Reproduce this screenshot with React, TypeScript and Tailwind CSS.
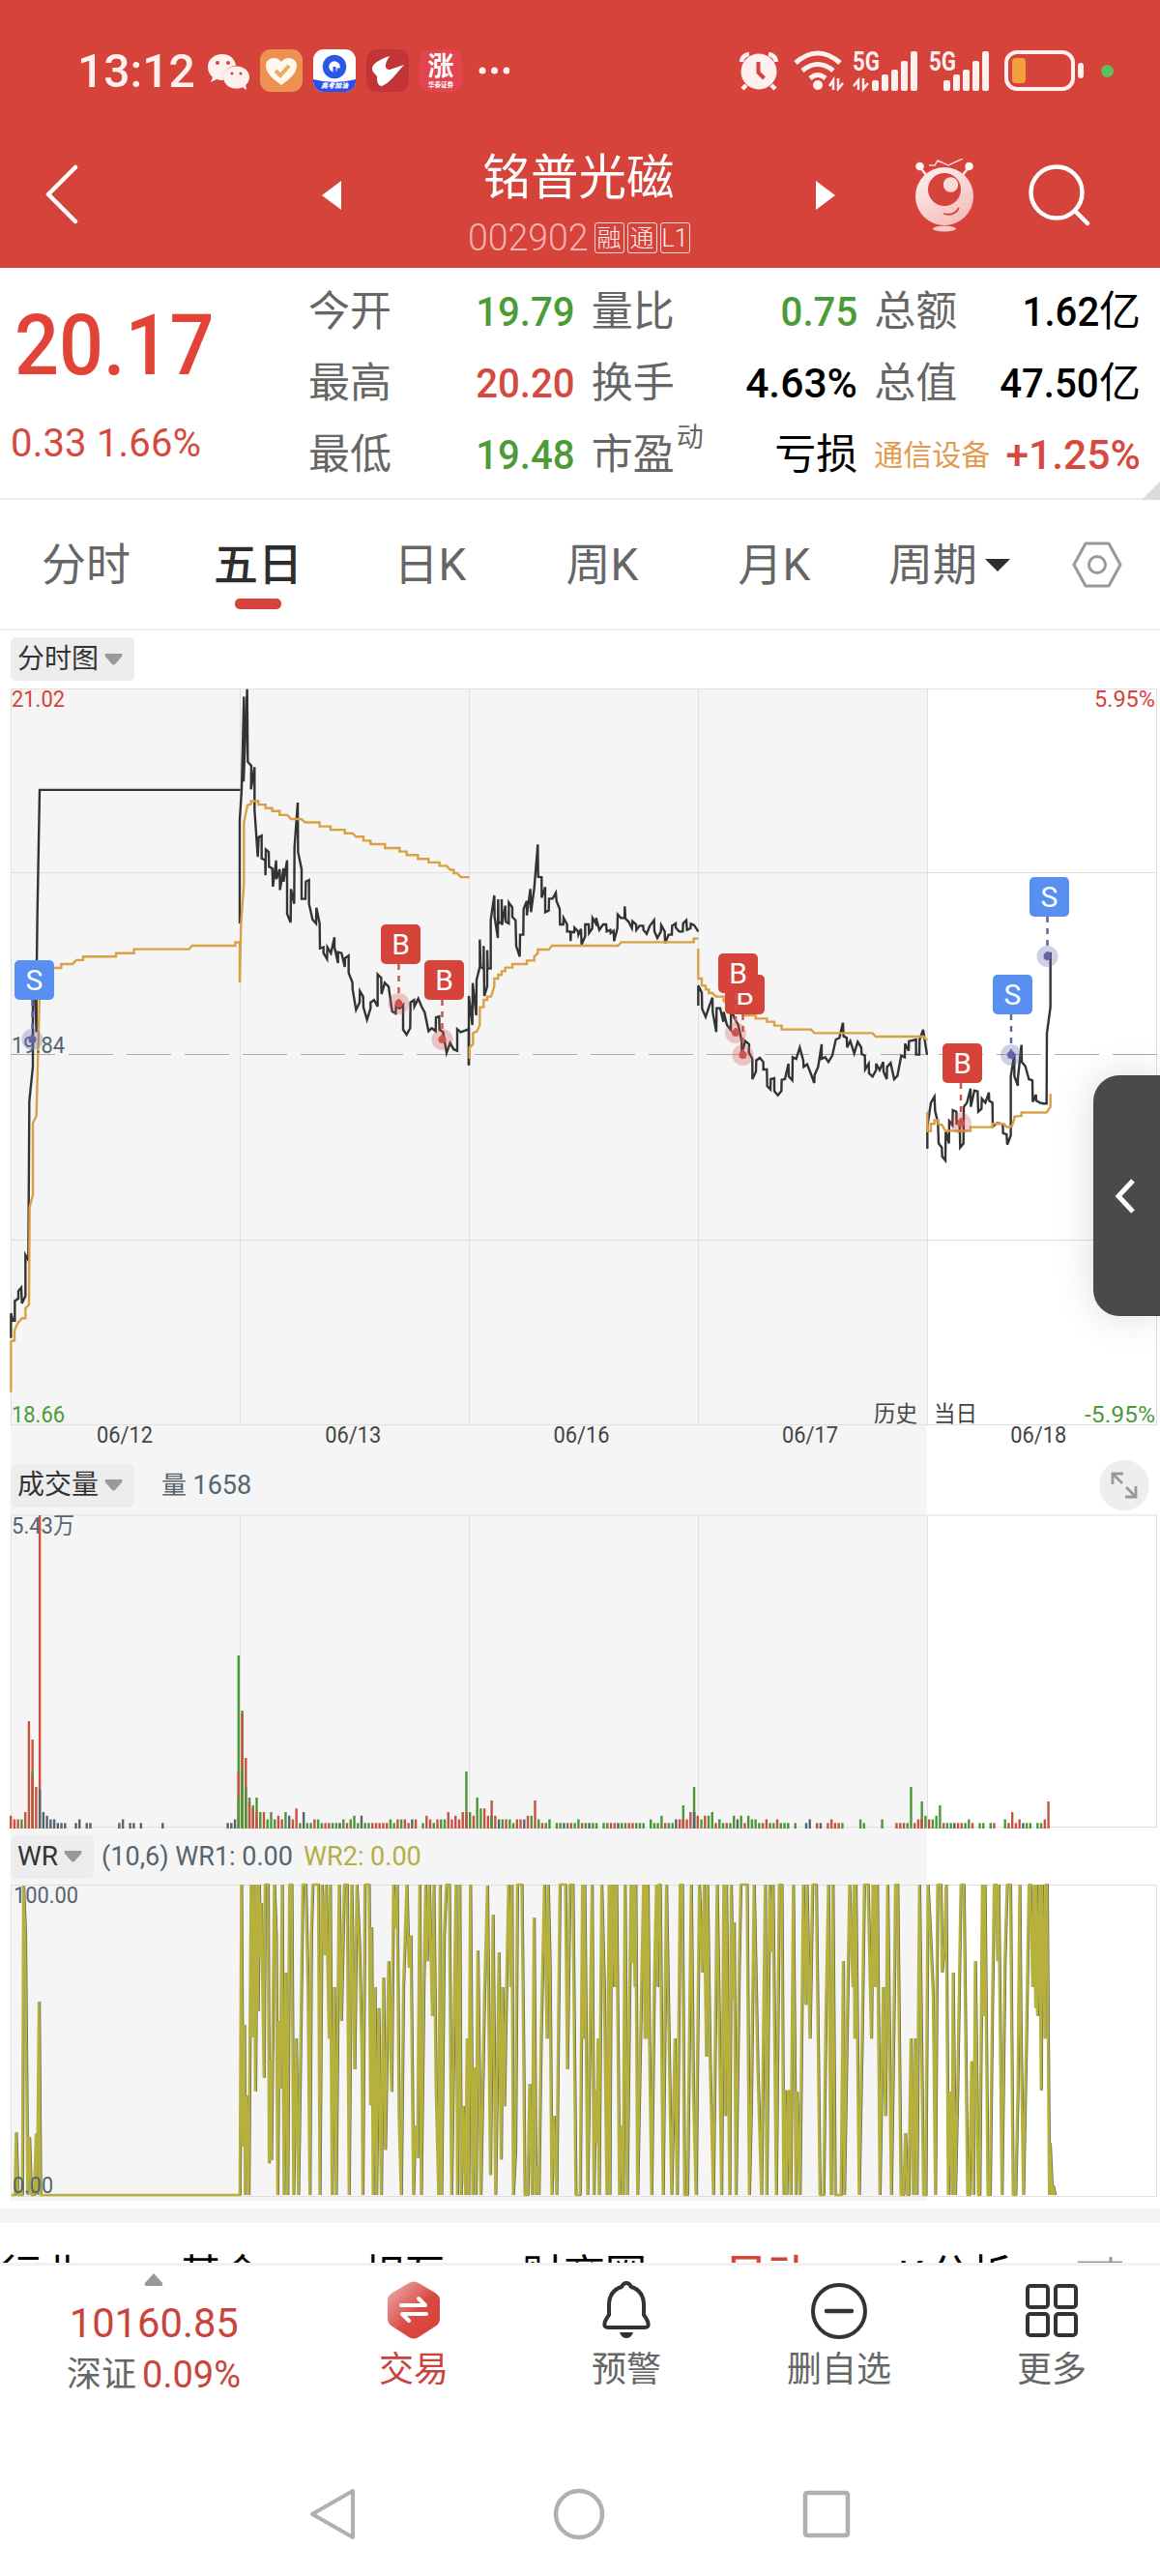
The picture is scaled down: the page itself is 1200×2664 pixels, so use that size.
import { clsx } from 'clsx'
import type { ReactNode } from 'react'

const quotes = [
  { label: '今开', value: '19.79', tone: 'text-[#4b9b37]' },
  { label: '量比', value: '0.75', tone: 'text-[#4b9b37]' },
  { label: '总额', value: '1.62', unit: '亿', tone: 'text-black' },
  { label: '最高', value: '20.20', tone: 'text-[#d5493f]' },
  { label: '换手', value: '4.63%', tone: 'text-black' },
  { label: '总值', value: '47.50', unit: '亿', tone: 'text-black' },
  { label: '最低', value: '19.48', tone: 'text-[#4b9b37]' },
  { label: '市盈', sup: '动', value: '', unit: '亏损', tone: 'text-black' },
  { label: '通信设备', small: true, value: '+1.25%', tone: 'text-[#d5493f]' },
]

const periods = ['分时', '五日', '日K', '周K', '月K']

// Price and average lines, one entry per stretch of days
const priceLines = [
  {
    transform: 'translate(0 700) scale(0.33333 0.5102)',
    price: [
      '34,1340 34,1290 40,1305 46,1305 46,1265 57,1260 57,1245 66,1238 68,1270 79,1255 79,1172 88,1182 91,860 102,790 102,655 108,625 113,720 113,640 116,480 123,229 746,229',
      '744,500 744,290 750,229 757,40 756,212 767,25 769,172 780,180 779,228 790,183 790,270 800,365 803,325 812,322 812,368 823,372 824,402 825,350 834,355 835,385 845,388 847,425 857,372 858,410 868,390 869,432 880,388 880,415 891,372 891,480 902,498 903,430 913,460 914,345 924,255 925,355 936,390 936,450 948,450 949,415 959,412 959,460 970,492 981,500 982,468 992,500 993,550 1004,548 1004,560 1015,572 1016,548 1027,560 1038,528 1038,548 1049,580 1049,558 1060,560 1070,588 1071,570 1082,565 1082,600 1094,620 1094,632 1105,675 1116,660 1117,637 1127,648 1128,670 1139,695 1150,672 1150,660 1161,655 1172,668 1172,603 1183,610 1184,643 1194,620 1206,628 1217,678 1228,682 1229,668 1240,672 1251,665 1251,715 1262,725 1273,712 1274,660 1285,655 1286,668 1298,652 1308,668 1318,680 1330,718 1340,712 1352,718 1353,690 1363,688 1364,715 1375,720 1386,762 1397,742 1408,755 1419,758 1419,714 1430,720 1455,714 1455,787',
    ],
    average: [
      '34,1450 34,1347 45,1345 45,1325 55,1310 68,1300 79,1300 79,1280 90,1272 92,1075 102,1050 102,905 113,890 123,640 150,598 169,590 190,590 190,582 225,582 237,574 258,574 258,567 360,567 360,560 416,560 416,552 587,552 596,545 730,545 730,538 744,538 744,618',
      '744,620 748,500 757,420 757,295 768,260 779,258 779,252 802,252 802,259 824,259 824,266 845,266 845,272 868,272 868,280 892,280 903,288 935,288 947,295 992,295 992,303 1026,303 1026,310 1070,310 1070,317 1094,317 1105,324 1128,324 1128,332 1150,332 1150,339 1195,339 1195,347 1240,347 1240,354 1262,354 1262,361 1297,361 1297,369 1330,369 1330,376 1364,376 1364,383 1386,383 1397,391 1408,391 1408,398 1419,398 1430,406 1457,406',
    ],
  },
  {
    transform: 'translate(480 820) scale(0.33333)',
    price: [
      '15,845 15,630 26,720 27,590 38,690 39,580 49,540 49,455 52,540 61,545 61,475 63,630 72,600 72,488 74,545 83,545 83,395 94,318 95,385 105,450 106,330 107,405 117,400 117,330 118,410 128,350 130,400 139,405 139,340 150,355 150,385 160,395 162,475 173,508 174,440 184,440 185,360 195,335 195,380 206,298 208,370 218,295 229,160 230,260 241,262 241,325 252,292 252,370 263,365 264,328 275,328 285,310 287,335 297,360 298,408 308,408 309,388 320,408 320,430 330,430 331,460 332,432 342,432 343,418 354,430 355,440 363,422 365,470 376,445 376,408 387,408 388,435 398,420 399,388 409,405 410,388 420,425 432,408 441,408 443,430 454,425 455,435 464,428 466,460 476,420 477,377 487,388 498,388 499,352 501,390 511,400 521,420 523,398 534,408 535,425 545,412 556,412 557,425 567,437 577,412 590,395 591,430 600,450 611,430 612,410 623,430 624,466 635,440 645,440 646,412 657,405 657,418 668,430 679,430 680,405 690,395 692,425 703,420 704,406 714,410 727,430',
      '727,660 727,598 738,620 739,670 750,695 760,665 771,635 772,680 783,742 784,668 795,668 805,710 806,680 816,720 828,735 829,670 840,700 851,720 862,770 862,810 873,770 885,780 884,805 895,825 895,888 906,865 907,830 918,822 929,835 929,858 940,858 941,910 951,920 952,888 963,885 963,925 974,938 985,925 986,890 996,888 1007,840 1008,880 1019,892 1020,820 1031,825 1042,790 1053,830 1054,850 1065,842 1076,870 1087,900 1088,875 1099,850 1110,780 1110,825 1121,820 1131,835 1143,815 1154,765 1165,760 1176,713 1178,755 1188,760 1189,790 1199,770 1211,808 1222,772 1233,790 1234,810 1244,815 1245,858 1256,840 1257,870 1268,880 1279,860 1279,840 1290,860 1301,835 1302,865 1312,888 1313,850 1324,838 1335,888 1345,878 1357,815 1368,820 1369,778 1380,800 1381,770 1392,768 1403,765 1403,812 1413,812 1414,765 1425,735 1437,813',
    ],
    average: [
      '17,825 17,790 28,780 28,745 40,740 49,720 49,665 61,665 61,642 72,642 72,632 84,632 94,600 94,576 106,576 106,564 117,564 117,553 128,553 128,542 150,542 150,531 195,531 195,520 218,520 218,508 229,498 229,486 263,486 273,474 478,474 488,463 713,463 713,452 727,452',
      '727,483 727,576 738,576 738,598 750,598 750,610 760,610 760,621 771,621 782,632 806,632 806,645 830,665 870,690 905,690 905,700 940,700 940,710 963,710 963,722 986,722 986,734 1077,734 1087,745 1268,745 1278,756 1427,756 1437,768',
    ],
  },
  {
    transform: 'translate(880 850) scale(0.33333 0.42088)',
    price: [
      '238,803 238,750 249,690 260,675 262,710 271,740 273,790 283,800 284,822 294,832 295,760 305,790 306,735 316,745 317,708 328,712 329,740 338,735 340,800 350,790 351,700 361,690 372,655 373,700 384,660 394,662 396,712 406,705 407,680 418,690 429,665 430,685 440,690 441,748 455,740 472,742 473,765 484,768 486,793 497,770 497,625 508,570 508,625 519,648 519,630 530,548 531,590 542,600 553,632 564,635 565,688 575,670 576,685 587,690 597,692 608,692 609,520 620,455 620,320',
    ],
    average: [
      '238,712 238,760 249,760 249,742 260,742 260,733 272,733 272,742 284,745 294,759 372,759 372,750 440,750 440,742 475,742 485,750 500,748 508,730 508,724 530,722 530,714 608,714 620,700 620,668',
    ],
  },
]

// x and y are the badge corner, px and py the marked price point
const trades = [
  { side: 'S', x: 15, y: 993, px: 33.5, py: 1075 },
  { side: 'B', x: 394, y: 956, px: 412.5, py: 1038 },
  { side: 'B', x: 439, y: 993, px: 457.5, py: 1075 },
  { side: 'B', x: 750, y: 1008, px: 768.5, py: 1091 },
  { side: 'B', x: 743, y: 986, px: 761, py: 1068 },
  { side: 'B', x: 975, y: 1079, px: 994, py: 1161.5 },
  { side: 'S', x: 1027, y: 1008, px: 1046, py: 1091 },
  { side: 'S', x: 1065, y: 907, px: 1083.5, py: 989 },
]

// Two characters per column: colour (r, g, s) and level; "--" is an empty minute
const volume =
  'r3r2r2g2r4--------s4s3s2s2s1s1s1----s1s2--s1s1--------------s1s2--s1s1--s1----------s1' +
  '----------------------------------s1s1s2' +
  '------------g4r4g2g4g2r3r2g4s3r2r5g1s4g1g1r2g2g1r1r1g1g1s1g2r1g2g3g1s3g1g1r1r1r1r1r1g2g1r2g2r2r1s2r2--g1r3r2g1r2g2g2r4r2r3r2r4' +
  'r4g4r3--g5r5r3g3r3s2g2r2g2g1r2r2s2r3g3--g2r1g1g2--g1g1s1g1r1g1g2r1g1s1g1g1--g1g1r1r1s1g1g1r1r1g1g1g1--g2g1g1g3r1g1g1s2r2r2r2r4' +
  's4r3g2r3g3g4r1g2g1r1g1g3s2g3r1g3g2g2g1r1r2g1g1r2g1g1g1--g1----s1s2--r1s1--r1r2r1r1g1--------g2g1--------g2------r1r1r1g1--r1r2' +
  'r2g3r2g2g3--r1g1g1s1r1r1g1g2r1--g1g1--g1r1----g2r1r4r1r2s1g1g1--g1g1r2--'

const tallVolume: [number, number, string][] = [
  [5, 111, 'r'], [6, 92, 'r'], [6, 59, 'g'], [6, 54, 'r'], [7, 43, 'r'], [8, 324, 'r'], [8, 40, 's'],
  [63, 179, 'g'], [63, 59, 'r'], [63, 33, 'g'], [64, 122, 'g'], [64, 119, 'r'], [64, 62, 'g'],
  [65, 73, 'r'], [65, 43, 'g'], [66, 32, 'g'], [66, 28, 'r'], [67, 24, 'g'], [67, 21, 'r'],
  [68, 32, 'g'], [68, 17, 'r'], [126, 59, 'g'], [126, 17, 'r'], [129, 32, 'g'], [133, 29, 'r'],
  [133, 13, 'g'], [145, 29, 'r'], [186, 24, 'g'], [186, 10, 'r'], [189, 43, 'g'], [189, 17, 's'],
  [249, 43, 'g'], [252, 28, 'g'], [252, 10, 'r'], [257, 24, 'g'], [287, 28, 'r'],
]

const volumeColors: Record<string, string> = { r: '#c9513f', g: '#4b9738', s: '#56646f' }

const wrHistory =
  '31,1020 40,1020 43,826 48,1020 60,1020 63,60 68,210 72,720 74,1020 79,840 84,1020 92,1020 97,830 100,1020 105,420 109,1020 648,1020 652,57 656,870 660,493 662,1020 666,712 672,1020 678,57 682,530 686,57 690,698 694,57 697,450 700,57 704,285 706,115 713,657 716,57 724,57 727,922 731,600 733,912 741,57 746,220 750,1020 753,480 757,690 762,57 767,1020 772,330 777,1020 782,57 788,57 793,1020 800,535 806,1020 812,560 818,57 826,57 832,375 837,1020 841,210 845,57 860,57 864,1020 870,57 877,275 881,57 889,535 892,57 897,1020 903,375 908,1020 916,57 922,480 930,57 938,57 943,1020 950,57 958,630 964,57 971,245 978,600 980,1020 986,57 997,57 1001,742 1004,190 1008,1020 1013,375 1017,1020 1023,440 1030,1020 1036,345 1041,880 1050,295 1058,700 1063,57 1067,190 1073,57 1078,775 1084,1020 1090,375 1099,57 1105,315 1110,215 1117,1020 1122,805 1128,905 1134,57 1138,1020 1145,375 1150,57 1154,295 1160,57 1168,465 1172,57 1178,690 1185,1020 1189,57 1193,1020 1200,215 1206,57 1214,57 1220,1020 1226,530 1232,57 1236,1020 1242,57 1246,1020 1252,745 1258,1020 1262,535 1266,1020 1271,57 1277,1020 1282,625 1286,1020 1291,262 1299,1020 1309,400 1317,60 1325,958 1332,150 1339,1020 1348,268 1354,910 1358,375 1363,745 1366,535 1374,57 1380,375 1383,57 1387,1020 1393,880 1398,57 1410,57 1415,600 1418,1020 1426,1020 1431,675 1438,1020 1443,160 1448,1020 1452,930 1456,1020 1462,535 1471,57 1478,535 1481,57 1486,295 1491,1020 1497,775 1504,1020 1513,57 1528,57 1533,630 1540,57 1548,57 1556,1020 1562,1020 1568,1020'

const wrRecent =
  '0,1020 6,57 8,535 12,57 20,1020 32,57 37,1020 42,695 45,860 48,535 51,1020 58,57 65,375 72,1020 78,57 80,1020 84,57 86,375 90,57 95,375 98,57 106,1020 112,805 116,1020 121,57 127,1020 137,57 141,300 144,57 148,375 150,57 155,1020 163,530 171,57 175,535 178,57 181,535 183,57 187,535 193,1020 200,375 206,57 209,375 212,57 216,57 224,1020 233,57 240,535 247,1020 256,535 262,1020 270,57 276,57 282,1020 290,1020 300,57 306,700 313,1020 322,57 330,330 335,57 341,590 344,57 351,605 360,1020 370,57 376,490 382,1020 388,57 393,775 395,57 404,1020 408,57 413,415 416,175 421,1020 430,295 434,57 451,57 457,1020 462,775 470,57 480,630 490,1020 500,57 504,1020 512,57 516,265 521,57 530,1020 538,57 545,57 550,1020 554,695 558,1020 563,695 569,1020 576,57 583,1020 586,700 594,1020 603,57 610,430 613,57 621,535 628,57 638,57 648,1020 658,1020 664,470 671,57 678,1020 683,57 689,1020 705,1020 711,295 714,1020 728,57 737,375 740,57 742,535 745,57 754,1020 762,535 768,57 778,57 787,535 791,57 794,375 797,57 800,375 803,57 810,1020 819,375 825,775 831,57 841,1020 850,300 852,57 858,57 867,1020 874,1020 879,828 884,1020 888,1020 894,535 900,1020 905,535 910,1020 917,57 928,1020 934,1020 940,57 947,215 954,400 960,1020 966,57 975,57 978,330 985,245 989,57 995,1020 1000,700 1005,1020 1008,330 1014,1020 1020,700 1029,57 1037,57 1047,1020 1052,1020 1058,605 1063,1020 1068,295 1076,1020 1080,1020 1087,57 1091,465 1094,57 1102,1020 1108,1020 1114,440 1119,57 1124,57 1128,295 1131,57 1140,1020 1148,295 1154,57 1163,57 1170,1020 1177,1020 1183,700 1188,57 1191,480 1198,1020 1206,540 1213,57 1217,57 1223,375 1227,57 1231,440 1233,57 1236,465 1242,57 1246,695 1249,57 1253,300 1256,535 1258,57 1262,57 1268,1020 1270,860 1276,1020 1278,990 1284,1020'

const dates = ['06/12', '06/13', '06/16', '06/17', '06/18']
const dayLines = [11.5, 248.5, 485.5, 722.5, 959.5, 1196.5]

function StatusBar() {
  return (
    <div className="flex h-[146px] items-center pl-[80px] text-[#fff0f0]">
      <span className="w-[135px] origin-left scale-x-[0.98] text-[49px] leading-none font-medium">13:12</span>
      <svg className="h-11 w-11" viewBox="0 0 44 44" fill="currentColor">
        <path d="M15 5C6 5 0 11 0 18c0 5 2 8 5 11l-2 5 6-3c3 1 6 1 7 1-1-8 5-15 13-15C28 9 22 5 15 5z" />
        <ellipse cx="29.500" cy="29" rx="13.500" ry="11.500" />
        <path d="M34 38l6 4-1-6z" />
        <g fill="#d5433b">
          <circle cx="10" cy="14" r="2" />
          <circle cx="21" cy="14" r="2" />
          <circle cx="25" cy="25" r="1.600" />
          <circle cx="34" cy="25" r="1.600" />
        </g>
      </svg>
      <svg className="ml-2.5 h-11 w-11" viewBox="0 0 44 44">
        <rect width="44" height="44" rx="11" fill="#ec9150" />
        <path d="M22 37C14 31 6 25 6 17c0-8 11-11 16-4 5-7 16-4 16 4 0 8-8 14-16 20z" fill="#fff8ec" />
        <path d="M16 22l5 5 9-10" stroke="#ecaa62" strokeWidth="4" fill="none" />
      </svg>
      <span className="relative ml-[11px] flex h-11 w-11 items-end justify-center overflow-hidden rounded-[11px] bg-white">
        <svg className="absolute inset-0" viewBox="0 0 44 44">
          <path d="M0 31Q22 37 44 31V44H0z" fill="#2a4fe6" />
          <ellipse cx="22" cy="18" rx="9" ry="9" fill="none" stroke="#2a57e8" strokeWidth="6.500" />
          <path d="M22 18v6h4v-3h3" fill="none" stroke="#2a57e8" strokeWidth="3" />
        </svg>
        <span className="relative pb-px text-[7px] leading-[9px] font-black text-white italic">高考加油</span>
      </span>
      <svg className="ml-[11px] h-11 w-11" viewBox="0 0 44 44">
        <rect width="44" height="44" rx="11" fill="#c23537" />
        <path d="M24 7Q6 13 6 20c0 5 6 6 5 10 0 5 2 8 5 8 8-3 14-12 23-22L24 21c-5 0-6-5 0-14z" fill="#fff" />
      </svg>
      <span className="ml-[11px] flex h-11 w-11 flex-col items-center rounded-[11px] bg-[#e24450] text-white">
        <span className="mt-1 text-[27px] leading-[29px] font-bold">涨</span>
        <span className="text-[6.5px] leading-[8px] font-bold">华泰证券</span>
      </span>
      <svg className="ml-[17px] h-2 w-8" viewBox="0 0 32 8" fill="currentColor">
        <circle cx="4" cy="4" r="3.500" />
        <circle cx="16.500" cy="4" r="3.500" />
        <circle cx="29" cy="4" r="3.500" />
      </svg>

      <svg className="ml-[237px] h-[42px] w-[42px]" viewBox="0 0 42 42" fill="none" stroke="currentColor" strokeWidth="4">
        <circle cx="21" cy="22" r="18.500" fill="currentColor" stroke="none" />
        <path d="M3 12Q4 5 11 4M39 12Q38 5 31 4M8 36l-4 4M34 36l4 4" strokeWidth="4.500" />
        <path d="M20.500 12v11l6 6" stroke="#d5433b" />
      </svg>
      <svg className="ml-[15px] h-[42px] w-[54px]" viewBox="0 0 54 42" fill="none" stroke="currentColor" strokeWidth="5">
        <path d="M2 13Q25-7 48 13M9 21Q25 8 41 21M17 29Q25 22 33 29" />
        <circle cx="25" cy="36" r="5" fill="currentColor" stroke="none" />
        <path d="M41 41V31l-4 6M46 29v11l5-6" strokeWidth="2.500" />
      </svg>
      <svg className="ml-[7px] h-[42px] w-[68px] overflow-visible" viewBox="0 0 68 42" fill="currentColor">
        <text x="0" y="20.500" fontSize="27" fontWeight="700" textLength="28" lengthAdjust="spacingAndGlyphs">5G</text>
        <path d="M6 41V31l-5 6M11 29v11l5-6" fill="none" stroke="currentColor" strokeWidth="2.500" />
        <rect x="20" y="31" width="7" height="11" rx="2" />
        <rect x="30" y="25" width="7" height="17" rx="2" />
        <rect x="40" y="20" width="7" height="22" rx="2" />
        <rect x="50" y="11" width="7" height="31" rx="2" />
        <rect x="60" y="1" width="7" height="41" rx="2" />
      </svg>
      <svg className="ml-[11px] h-[42px] w-[63px] overflow-visible" viewBox="0 0 63 42" fill="currentColor">
        <text x="0" y="20.500" fontSize="27" fontWeight="700" textLength="28" lengthAdjust="spacingAndGlyphs">5G</text>
        <rect x="15" y="31" width="7" height="11" rx="2" />
        <rect x="25" y="25" width="7" height="17" rx="2" />
        <rect x="35" y="20" width="7" height="22" rx="2" />
        <rect x="45" y="11" width="7" height="31" rx="2" />
        <rect x="55" y="1" width="7" height="41" rx="2" />
      </svg>
      <svg className="ml-[15px] h-[42px] w-[83px]" viewBox="0 0 83 42">
        <rect x="2" y="2" width="69" height="38" rx="11" fill="none" stroke="currentColor" strokeWidth="4" />
        <rect x="8" y="8" width="14" height="26" rx="4" fill="#f3a13e" />
        <rect x="76" y="13" width="6" height="16" rx="3" fill="currentColor" />
      </svg>
      <span className="ml-[17px] h-[13px] w-[13px] rounded-full bg-[#5fbf5f]" />
    </div>
  )
}

function TitleBar() {
  return (
    <div className="flex h-[131px] items-start pl-[47px] text-white">
      <svg className="mt-6 h-[62px] w-[34px]" viewBox="0 0 34 62" fill="none" stroke="currentColor" strokeWidth="4.500" strokeLinecap="round" strokeLinejoin="round">
        <path d="M31 3L3 31l28 28" />
      </svg>
      <svg className="mt-[41px] ml-[252px] h-[30px] w-5" viewBox="0 0 20 30" fill="currentColor">
        <path d="M20 0v30L0 15z" />
      </svg>
      <div className="flex w-[491px] flex-col items-center">
        <h1 className="mt-2.5 text-[49.5px] leading-[56px]">铭普光磁</h1>
        <div className="mt-[18px] flex h-8 items-center gap-[3px]">
          <span className="-mr-1.5 w-[134px] origin-left scale-x-[0.96] text-[39px] leading-none font-light text-[#f7b3af]">002902</span>
          {['融', '通', 'L1'].map(tag => (
            <span key={tag} className="flex h-8 w-[31px] items-center justify-center rounded-[3px] border border-[#fbdcda] text-[25px] leading-none font-light text-[#fff0ef]">
              {tag}
            </span>
          ))}
        </div>
      </div>
      <svg className="mt-[41px] h-[30px] w-5" viewBox="0 0 20 30" fill="currentColor">
        <path d="M0 0v30l20-15z" />
      </svg>
      <svg className="mt-[18px] ml-[83px] h-[76px] w-[60px]" viewBox="0 0 60 76">
        <defs>
          <linearGradient id="bot" x1="0" y1="0" x2="0.600" y2="1">
            <stop offset="0" stopColor="#fff4f3" />
            <stop offset="1" stopColor="#f4bfbc" />
          </linearGradient>
        </defs>
        <path d="M4 8l8 10M56 8l-8 10" stroke="#fde5e3" strokeWidth="2.500" />
        <circle cx="4.500" cy="8" r="4.300" fill="#fff4f3" />
        <circle cx="55.500" cy="8" r="4.300" fill="#fff4f3" />
        <path d="M14 7h6l3-5 11 5 15-7" fill="none" stroke="#fbd2cf" strokeWidth="1.500" />
        <circle cx="30" cy="39" r="30" fill="url(#bot)" />
        <circle cx="30" cy="32" r="17" fill="#d5433b" />
        <circle cx="36.500" cy="27" r="7.700" fill="#fbdad8" />
        <path d="M29 57q11 3 16-6" fill="none" stroke="#d5433b" strokeWidth="1.800" />
        <ellipse cx="30" cy="72.500" rx="12" ry="3" fill="#f9c9c6" />
      </svg>
      <svg className="mt-6 ml-[57px] h-16 w-16" viewBox="0 0 64 64" fill="none" stroke="currentColor" strokeWidth="4.500" strokeLinecap="round">
        <circle cx="29" cy="29" r="26.500" />
        <path d="M48 48l13 13" />
      </svg>
    </div>
  )
}

function Quote() {
  return (
    <section className="relative flex h-60 border-b-2 border-[#ececec]">
      <div className="w-[319px] pl-[15px] text-[#d5493f]">
        <div className="mt-[32px] origin-left scale-x-[0.92] text-[88px] leading-[96px] font-medium text-[#e34236]">20.17</div>
        <div className="mt-[32px] -ml-1 text-[40px] leading-[44px] tracking-[0.2px] whitespace-nowrap">0.33 1.66%</div>
      </div>
      <div className="mt-[8px] grid h-[222px] w-[861px] grid-cols-3 gap-x-[17px]">
        {quotes.map(({ label, sup, small, value, unit, tone }) => (
          <div key={label} className="flex h-[74px] items-center justify-between">
            <span className={clsx('flex whitespace-nowrap', small ? 'text-[30px] text-[#e39a4c]' : 'text-[43px] text-[#666]')}>
              {label}
              {sup && <sup className="top-0 ml-0.5 text-[28px] leading-[30px]">{sup}</sup>}
            </span>
            <span className={clsx('flex text-[43px] whitespace-nowrap', tone)}>
              <span className={clsx('origin-right font-medium', value.endsWith('%') ? 'scale-x-[0.99]' : 'scale-x-[0.935]')}>{value}</span>
              {unit}
            </span>
          </div>
        ))}
      </div>
      <svg className="absolute right-0 -bottom-0.5 h-[19px] w-[19px]" viewBox="0 0 19 19" fill="#dcdcdc">
        <path d="M19 0v19H0z" />
      </svg>
    </section>
  )
}

function PeriodTabs() {
  return (
    <nav className="flex h-[135px] border-b-2 border-[#ececec] text-[46px] text-[#666]">
      {periods.map(period => (
        <div key={period} className="relative flex w-[178px] items-center justify-center pt-0.5">
          <span className={clsx(period === '五日' && 'font-medium text-[#2d2d2d]')}>{period}</span>
          {period === '五日' && <span className="absolute bottom-5 h-[11px] w-12 rounded-[5px] bg-[#d5433b]" />}
        </div>
      ))}
      <div className="flex items-center pl-[29px]">
        <span className="pt-0.5">周期</span>
        <svg className="mt-0.5 ml-2 h-[13px] w-[26px]" viewBox="0 0 26 13" fill="#2d2d2d">
          <path d="M0 0h26L13 13z" />
        </svg>
        <svg className="ml-16 h-12 w-[52px]" viewBox="0 0 52 48" fill="none" stroke="#999" strokeWidth="3" strokeLinejoin="round">
          <path d="M14 2h24l12 22-12 22H14L2 24z" />
          <circle cx="26" cy="24" r="8.500" />
        </svg>
      </div>
    </nav>
  )
}

function Chip({ children }: { children: ReactNode }) {
  return (
    <span className="flex h-[45px] items-center gap-1.5 rounded-[5px] bg-[#ededed] px-[7px] text-[28px] text-[#333]">
      {children}
      <svg className="mr-[5px] h-3 w-[19px]" viewBox="0 0 19 12" fill="#999">
        <path d="M1 0h17q1 1 0 3l-7 8q-1.500 1-3 0L1 3q-1-2 0-3z" />
      </svg>
    </span>
  )
}

function Grid({ top, bottom, rows }: { top: number; bottom: number; rows: number[] }) {
  return (
    <g stroke="#dfdfdf" strokeWidth="1">
      {dayLines.map(x => <line key={x} x1={x} x2={x} y1={top} y2={bottom} />)}
      {rows.map(y => <line key={y} x1="11" x2="1197" y1={y} y2={y} />)}
    </g>
  )
}

function PriceChart() {
  return (
    <svg className="block h-[790px] w-[1200px]" viewBox="0 712 1200 790">
      <Grid top={712} bottom={1473} rows={[712.5, 902.5, 1282.5, 1473.5]} />
      <line x1="11" x2="1197" y1="1090.500" y2="1090.500" stroke="#aaa" strokeWidth="1.200" strokeDasharray="46 14" />
      {priceLines.map(({ transform, price, average }) => (
        <g key={transform} transform={transform} fill="none">
          {price.map(points => <polyline key={points} points={points} stroke="#333" strokeWidth="2.400" vectorEffect="non-scaling-stroke" />)}
          {average.map(points => <polyline key={points} points={points} stroke="#d9a144" strokeWidth="2.400" vectorEffect="non-scaling-stroke" />)}
        </g>
      ))}
      <g fontSize="23">
        <text x="12" y="731" fill="#d5433b" textLength="55" lengthAdjust="spacingAndGlyphs">21.02</text>
        <text x="1132" y="731" fill="#d5433b" textLength="63" lengthAdjust="spacingAndGlyphs">5.95%</text>
        <text x="12" y="1089" fill="#56646f" textLength="55" lengthAdjust="spacingAndGlyphs">19.84</text>
        <text x="12" y="1471" fill="#4b9b37" textLength="55" lengthAdjust="spacingAndGlyphs">18.66</text>
        <text x="1122" y="1471" fill="#4b9b37" textLength="73" lengthAdjust="spacingAndGlyphs">-5.95%</text>
      </g>
      <g fontSize="22.500" fill="#444">
        <text x="904" y="1470">历史</text>
        <text x="966" y="1470">当日</text>
      </g>
      <g fontSize="23" fill="#444">
        {dates.map((date, i) => (
          <text key={date} x={100 + i * 236.3} y="1492" textLength="58" lengthAdjust="spacingAndGlyphs">{date}</text>
        ))}
      </g>
      {trades.map(({ side, x, y, px, py }) => {
        const dot = side === 'B' ? '#cf5450' : '#6264a4'
        return (
          <g key={`${px}-${py}`}>
            <line x1={px} x2={px} y1={y + 41} y2={py} stroke={dot} strokeWidth="2.500" strokeDasharray="6 6" />
            <circle cx={px} cy={py} r="11" fill={dot} fillOpacity="0.300" />
            <circle cx={px} cy={py} r="4" fill={dot} />
            <rect x={x} y={y} width="41" height="41" rx="5" fill={side === 'B' ? '#d5433b' : '#588ff0'} />
            <text x={x + 20.5} y={y + 31} fontSize="30" textAnchor="middle" fill="#fff">{side}</text>
          </g>
        )
      })}
    </svg>
  )
}

function VolumeChart() {
  const minutes = volume.match(/../g) ?? []
  return (
    <svg className="block h-[330px] w-[1200px]" viewBox="0 1565 1200 330">
      <Grid top={1567} bottom={1889} rows={[1567, 1889.5]} />
      <text x="12" y="1586" fontSize="24" fill="#56646f" textLength="65" lengthAdjust="spacingAndGlyphs">5.43万</text>
      {minutes.map((m, i) => {
        if (m === '--') return null
        const h = 2 + Number(m[1]) * 3.75
        return <rect key={i} x={10 + i * 3.74} y={1891 - h} width="2.400" height={h} fill={volumeColors[m[0]]} />
      })}
      {tallVolume.map(([i, h, c]) => (
        <rect key={`${i}-${h}`} x={10 + i * 3.74} y={1891 - h} width="2.400" height={h} fill={volumeColors[c]} />
      ))}
    </svg>
  )
}

function WrChart() {
  return (
    <svg className="block h-[332px] w-[1200px]" viewBox="0 1944 1200 332">
      <Grid top={1949} bottom={2271} rows={[1949.5, 2271.5]} />
      <g fill="none" strokeLinejoin="bevel">
        <g stroke="#5c655c" strokeWidth="2">
          <polyline transform="translate(1 1930) scale(0.3827 0.3333)" points={wrHistory} vectorEffect="non-scaling-stroke" />
          <polyline transform="translate(601 1930) scale(0.3827 0.3333)" points={wrRecent} vectorEffect="non-scaling-stroke" />
        </g>
        <g stroke="#b5b13c" strokeWidth="2.600">
          <polyline transform="translate(0 1930) scale(0.3827 0.3333)" points={wrHistory} vectorEffect="non-scaling-stroke" />
          <polyline transform="translate(600 1930) scale(0.3827 0.3333)" points={wrRecent} vectorEffect="non-scaling-stroke" />
        </g>
      </g>
      <g fontSize="23.500" fill="#56646f">
        <text x="14" y="1968" textLength="67" lengthAdjust="spacingAndGlyphs">100.00</text>
        <text x="13" y="2268" textLength="42" lengthAdjust="spacingAndGlyphs">0.00</text>
      </g>
    </svg>
  )
}

function Charts() {
  return (
    <section className="relative">
      <div className="flex h-[60px] items-start pt-[7px] pl-[11px]">
        <Chip>分时图</Chip>
      </div>
      <div className="bg-[linear-gradient(to_right,#fff_11px,#f5f5f5_11px,#f5f5f5_959px,#fff_959px)]">
        <PriceChart />
        <div className="flex h-[63px] items-center pt-[5px] pr-[11px] pl-[11px] text-[#56646f]">
          <Chip>成交量</Chip>
          <span className="ml-7 flex-1 text-[26px]">量 <span className="inline-block text-[27px]">1658</span></span>
          <span className="flex h-[52px] w-[52px] items-center justify-center rounded-full bg-[#eee]">
            <svg className="h-7 w-7" viewBox="0 0 28 28" fill="none" stroke="#999" strokeWidth="2.800">
              <path d="M2 13V2h11M2.500 2.500L12 12M16 16l9.500 9.500M26 15v11H15" />
            </svg>
          </span>
        </div>
        <VolumeChart />
        <div className="flex h-[49px] items-center pt-px pl-[11px] text-[27px] text-[#56646f]">
          <Chip>WR</Chip>
          <span className="ml-2 w-[209px] whitespace-nowrap">(10,6) WR1: 0.00</span>
          <span className="whitespace-nowrap text-[#b5ae43]">WR2: 0.00</span>
        </div>
        <WrChart />
      </div>
      <button className="absolute top-[460px] right-0 flex h-[249px] w-[69px] items-center rounded-l-[27px] bg-[#4a4a4a] pl-[22px] shadow-[0_0_40px_rgba(0,0,0,0.14)]">
        <svg className="h-9 w-[21px]" viewBox="0 0 21 36" fill="none" stroke="#fff" strokeWidth="5">
          <path d="M19 2L4 18l15 16" />
        </svg>
      </button>
    </section>
  )
}

// Strip of section tabs that the footer cuts off just below its top edge
function SectionTabs() {
  return (
    <div className="h-[41px] overflow-hidden text-[43px] leading-[50px] text-black">
      <div className="flex pt-[29px] whitespace-nowrap">
        <span className="w-[186px]">行业</span>
        <span className="w-[189px]">基金</span>
        <span className="w-[165px]">相互</span>
        <span className="w-[211px]">财商圈</span>
        <span className="w-[178px] font-medium text-[#d5433b]">异动</span>
        <span className="w-[186px]"><span className="inline-block w-8">K</span>分析</span>
        <svg className="mt-1.5 h-10 w-[46px]" viewBox="0 0 46 40" fill="none" stroke="#999" strokeWidth="3">
          <path d="M0 6h46M34 0v12" />
        </svg>
      </div>
    </div>
  )
}

function FooterItem({ label, active, children }: { label: string; active?: boolean; children: ReactNode }) {
  return (
    <div className="flex w-[220px] flex-col items-center pt-[15px]">
      <svg className="h-[62px] w-[62px]" viewBox="0 0 62 62" fill="none" stroke="#333" strokeWidth="4">
        {children}
      </svg>
      <span className={clsx('mt-[9px] text-[36px] leading-[44px]', active ? 'text-[#c9443c]' : 'text-[#666]')}>{label}</span>
    </div>
  )
}

function Footer() {
  return (
    <footer className="flex h-[190px] border-t-[3px] border-[#f2f2f2]">
      <div className="flex w-[318px] flex-col items-center pt-2 text-[#c9443c]">
        <svg className="h-[13px] w-5" viewBox="0 0 20 13" fill="#999">
          <path d="M10 0l9 10q1 3-1 3H2q-2 0-1-3z" />
        </svg>
        <span className="mt-[13px] scale-x-[0.97] text-[43px] leading-[50px]">10160.85</span>
        <span className="mt-[7px] flex items-center text-[36px] leading-[44px] text-[#666]">
          深证
          <span className="ml-1.5 text-[38px] text-[#c9443c]">0.09%</span>
        </span>
      </div>
      <FooterItem label="交易" active>
        <defs>
          <linearGradient id="trade" x1="0" y1="0" x2="1" y2="1">
            <stop offset="0" stopColor="#ecb4b0" />
            <stop offset="0.550" stopColor="#d84b43" />
            <stop offset="1" stopColor="#d73f36" />
          </linearGradient>
        </defs>
        <path d="M26 3q5-3 10 0l17 10q5 3 5 8v19q0 5-5 8L36 59q-5 3-10 0L9 48q-5-3-5-8V21q0-5 5-8z" fill="url(#trade)" stroke="none" />
        <path d="M18 26h25l-7-7M44 35H19l7 7" stroke="#fff" strokeLinejoin="round" strokeLinecap="round" />
      </FooterItem>
      <FooterItem label="预警">
        <path d="M31 3c-3 0-4 2-5 4-9 3-13 10-13 19v10c-6 8-6 13-1 13h38c5 0 5-5-1-13V26c0-9-4-16-13-19-1-2-2-4-5-4z" strokeLinejoin="round" />
        <path d="M24 54h14q-2 6-7 6t-7-6z" fill="#333" stroke="none" />
      </FooterItem>
      <FooterItem label="删自选">
        <circle cx="31" cy="32" r="27" />
        <path d="M18 32h26" strokeWidth="4.500" strokeLinecap="round" />
      </FooterItem>
      <FooterItem label="更多">
        <rect x="6" y="6" width="21" height="22" rx="3" />
        <rect x="35" y="6" width="21" height="22" rx="3" />
        <rect x="6" y="35" width="21" height="22" rx="3" />
        <rect x="35" y="35" width="21" height="22" rx="3" />
      </FooterItem>
    </footer>
  )
}

function SystemNav() {
  return (
    <div className="flex h-[134px] items-center pt-1.5 pl-[319px]">
      <svg className="h-14 w-[52px]" viewBox="0 0 52 56" fill="none" stroke="#b0b0b0" strokeWidth="4" strokeLinejoin="round">
        <path d="M46 4v48L4 28z" />
      </svg>
      <svg className="ml-[200px] h-14 w-14" viewBox="0 0 56 56" fill="none" stroke="#b0b0b0" strokeWidth="4.500">
        <circle cx="28" cy="28" r="24" />
      </svg>
      <svg className="ml-[200px] h-14 w-14" viewBox="0 0 56 56" fill="none" stroke="#b0b0b0" strokeWidth="4.500">
        <rect x="6" y="6" width="44" height="44" rx="2" />
      </svg>
    </div>
  )
}

export default function App() {
  return (
    <main className="h-[2664px] w-[1200px] overflow-hidden bg-white font-[Roboto,'Noto_Sans_CJK_SC',sans-serif]">
      <header className="h-[277px] bg-[#d5433b]">
        <StatusBar />
        <TitleBar />
      </header>
      <Quote />
      <PeriodTabs />
      <Charts />
      <div className="mt-2 h-[15px] bg-[#f4f4f4]" />
      <SectionTabs />
      <Footer />
      <SystemNav />
    </main>
  )
}
